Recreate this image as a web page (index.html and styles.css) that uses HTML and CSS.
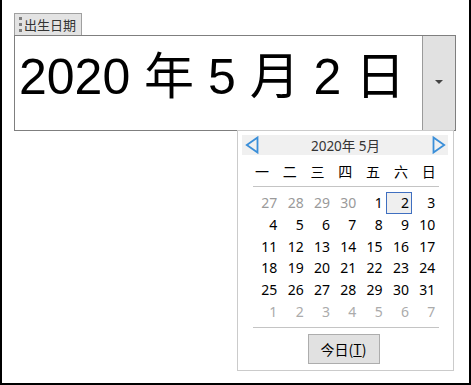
FILE: index.html
```html
<!DOCTYPE html>
<html lang="zh">
<head>
<meta charset="utf-8">
<title>出生日期</title>
<link rel="stylesheet" href="styles.css">
</head>
<body>
<div class="frame">
  <div class="field">
    <!-- content control tag -->
    <div class="tag"><span class="grip"><i></i><i></i><i></i></span>出生日期</div>
    <div class="box">
      <div class="value">2020 年 5 月 2 日</div>
      <div class="drop"><span class="caret"></span></div>
    </div>

    <!-- date picker dropdown -->
    <div class="popup">
      <div class="calHead">
        <svg class="arrow" width="14" height="18" viewBox="0 0 14 18"><polygon points="12.5,1.5 1.8,9 12.5,16.5" fill="none" stroke="#3b8fd9" stroke-width="1.8" stroke-linejoin="miter"/></svg>
        <span class="calTitle">2020年 5月</span>
        <svg class="arrow" width="14" height="18" viewBox="0 0 14 18"><polygon points="1.5,1.5 12.2,9 1.5,16.5" fill="none" stroke="#3b8fd9" stroke-width="1.8" stroke-linejoin="miter"/></svg>
      </div>
      <div class="weekdays">
        <span>一</span><span>二</span><span>三</span><span>四</span><span>五</span><span>六</span><span>日</span>
      </div>
      <div class="rule"></div>
      <div class="days">
        <span class="other">27</span><span class="other">28</span><span class="other">29</span><span class="other">30</span><span>1</span><span class="sel">2</span><span>3</span>
        <span>4</span><span>5</span><span>6</span><span>7</span><span>8</span><span>9</span><span>10</span>
        <span>11</span><span>12</span><span>13</span><span>14</span><span>15</span><span>16</span><span>17</span>
        <span>18</span><span>19</span><span>20</span><span>21</span><span>22</span><span>23</span><span>24</span>
        <span>25</span><span>26</span><span>27</span><span>28</span><span>29</span><span>30</span><span>31</span>
        <span class="next">1</span><span class="next">2</span><span class="next">3</span><span class="next">4</span><span class="next">5</span><span class="next">6</span><span class="next">7</span>
      </div>
      <div class="rule"></div>
      <div class="todayRow">
        <button class="today">今日(<u>T</u>)</button>
      </div>
    </div>
  </div>
</div>
</body>
</html>
```

FILE: styles.css
```css
body {
  margin: 0;
  background: #fff;
  font-family: "Noto Sans", "Noto Sans CJK JP", sans-serif;
}
.frame {
  width: 471px;
  height: 385px;
  box-sizing: border-box;
  border: 2px solid #000;
  border-top: none;
  padding: 13px 0 0 12px;
}
.field {
  position: relative;
  width: 442px;
}
.tag {
  display: flex;
  align-items: center;
  width: 68px;
  height: 22px;
  box-sizing: border-box;
  border: 1px solid #a0a0a0;
  border-bottom: none;
  background: #e3e3e3;
  font-family: "Noto Sans CJK JP", sans-serif;
  font-size: 13px;
  color: #333;
  line-height: 1;
}
.grip {
  display: flex;
  flex-direction: column;
  gap: 3px;
  margin: 0 2px 0 4px;
}
.grip i {
  display: block;
  width: 3px;
  height: 3px;
  background: #7e7e7e;
}
.box {
  display: flex;
  height: 96px;
  box-sizing: border-box;
  border: 1px solid #7f7f7f;
}
.value {
  flex: 1;
  padding: 11px 0 0 4px;
  font-family: "Liberation Sans", "Noto Sans CJK JP", sans-serif;
  font-size: 50px;
  line-height: 60px;
  color: #000;
  white-space: nowrap;
}
.drop {
  width: 33px;
  box-sizing: border-box;
  border-left: 1px solid #9a9a9a;
  background: #e1e1e1;
  display: flex;
  justify-content: center;
  padding-top: 44px;
}
.caret {
  width: 0;
  height: 0;
  border-left: 4px solid transparent;
  border-right: 4px solid transparent;
  border-top: 4px solid #444;
}
.popup {
  position: absolute;
  left: 223px;
  top: 117px;
  width: 217px;
  height: 241px;
  box-sizing: border-box;
  border: 1px solid #cbcbcb;
  background: #fff;
  padding: 4px 4px 0 4px;
}
.calHead {
  display: flex;
  align-items: center;
  justify-content: space-between;
  height: 20px;
  width: 206px;
  background: #f0f0f0;
  padding: 0 2px 0 3px;
  box-sizing: border-box;
}
.arrow {
  display: block;
}
.calTitle {
  font-family: "Noto Sans", "Noto Sans CJK JP", sans-serif;
  font-size: 13.5px;
  color: #333;
}
.weekdays {
  display: grid;
  grid-template-columns: repeat(7, 27.8px);
  margin: 5px 0 0 6px;
  height: 22px;
  line-height: 22px;
  font-family: "Noto Sans CJK JP", sans-serif;
  font-size: 14px;
  color: #000;
  text-align: center;
}
.rule {
  height: 1px;
  width: 186px;
  margin: 4px 0 0 11px;
  background: #c4c4c4;
}
.days {
  display: grid;
  grid-template-columns: repeat(7, 26.33px);
  grid-auto-rows: 21.8px;
  margin: 5px 0 0 12px;
  font-size: 14px;
  line-height: 21.8px;
  color: #000;
}
.days span {
  text-align: right;
  padding-right: 3px;
  box-sizing: border-box;
}
.days .other {
  color: #9a9a9a;
}
.days .next {
  color: #ababab;
}
.days .sel {
  border: 1px solid #3f6fc0;
  background: #efefef;
  padding-right: 2px;
  line-height: 20px;
}
.todayRow {
  display: flex;
  justify-content: center;
  margin-top: 6px;
  padding-right: 4px;
}
.today {
  width: 72px;
  height: 30px;
  border: 1px solid #adadad;
  background: #e1e1e1;
  font-family: "Noto Sans CJK JP", sans-serif;
  font-size: 14px;
  color: #000;
  padding: 0;
}
```
